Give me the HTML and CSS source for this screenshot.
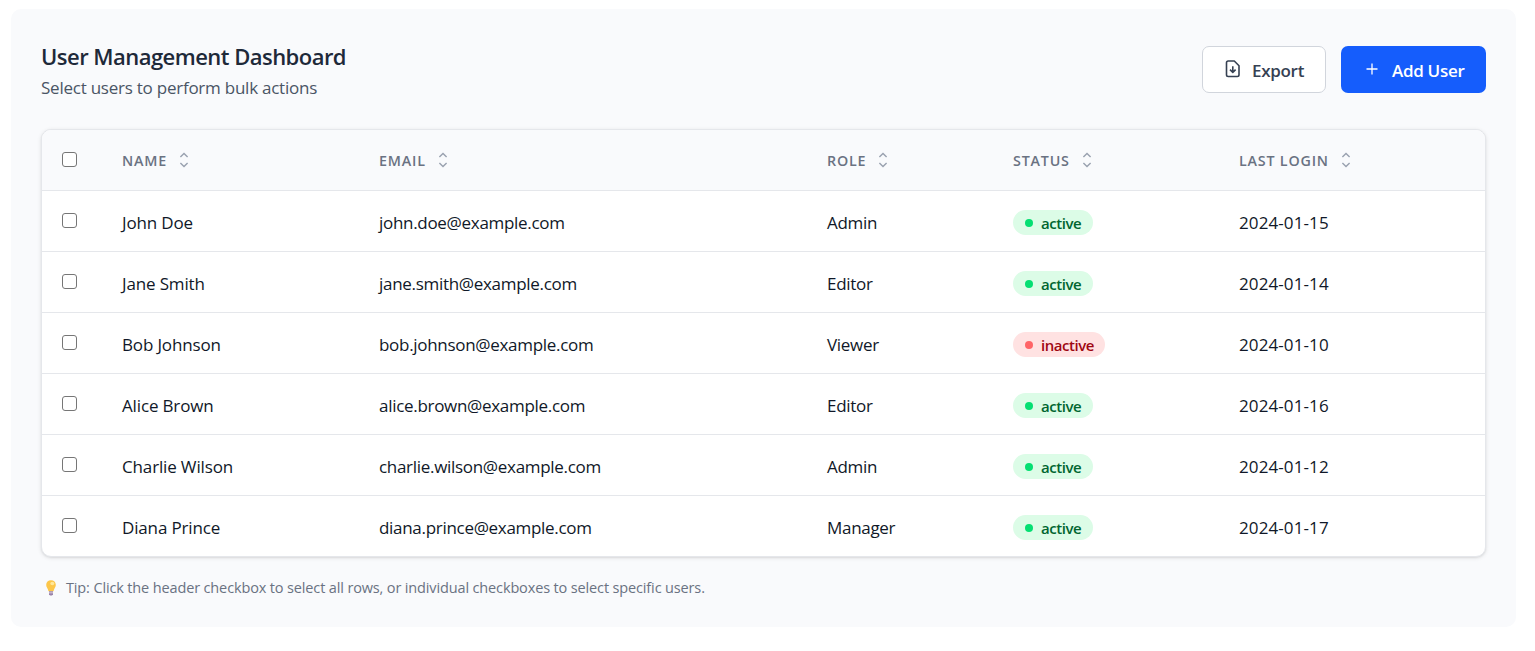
FILE: index.html
```html
<!DOCTYPE html>
<html lang="en">
<head>
<meta charset="utf-8">
<title>User Management Dashboard</title>
<link rel="stylesheet" href="styles.css">
</head>
<body>
<svg width="0" height="0" class="defs" aria-hidden="true">
  <symbol id="sort" viewBox="0 0 10 16"><path d="M1.4 5 5 1.4 8.6 5M1.4 11 5 14.6 8.6 11"/></symbol>
</svg>
<main class="panel">
  <header class="top">
    <div>
      <h1 class="title"><span>User Management Dashboard</span></h1>
      <p class="subtitle"><span>Select users to perform bulk actions</span></p>
    </div>
    <div class="actions">
      <button class="btn btn-light">
        <svg class="icon-file" width="16" height="18" viewBox="0 0 16 18"><path d="M9.3 1H3.2Q1.5 1 1.5 2.7V14.8Q1.5 16.5 3.2 16.5H12.3Q14 16.5 14 14.8V5.7ZM7.8 6.2V12.2M5 9.6 7.8 12.4 10.6 9.6"/></svg>
        <span class="export">Export</span>
      </button>
      <button class="btn btn-primary">
        <svg class="icon-plus" width="12" height="12" viewBox="0 0 12 12"><path d="M6 .5V11.5M.5 6H11.5"/></svg>
        <span class="add">Add User</span>
      </button>
    </div>
  </header>
  <section class="table">
    <div class="row head">
      <div class="check"><input type="checkbox"></div>
      <div><span>NAME</span><svg class="sort"><use href="#sort"/></svg></div>
      <div><span>EMAIL</span><svg class="sort"><use href="#sort"/></svg></div>
      <div><span>ROLE</span><svg class="sort"><use href="#sort"/></svg></div>
      <div><span>STATUS</span><svg class="sort"><use href="#sort"/></svg></div>
      <div><span>LAST LOGIN</span><svg class="sort"><use href="#sort"/></svg></div>
    </div>
    <div class="row"><div class="check"><input type="checkbox"></div><div class="name">John Doe</div><div>john.doe@example.com</div><div>Admin</div><div><span class="badge active">active</span></div><div class="date">2024-01-15</div></div>
    <div class="row"><div class="check"><input type="checkbox"></div><div class="name">Jane Smith</div><div>jane.smith@example.com</div><div>Editor</div><div><span class="badge active">active</span></div><div class="date">2024-01-14</div></div>
    <div class="row"><div class="check"><input type="checkbox"></div><div class="name">Bob Johnson</div><div>bob.johnson@example.com</div><div>Viewer</div><div><span class="badge inactive">inactive</span></div><div class="date">2024-01-10</div></div>
    <div class="row"><div class="check"><input type="checkbox"></div><div class="name">Alice Brown</div><div>alice.brown@example.com</div><div>Editor</div><div><span class="badge active">active</span></div><div class="date">2024-01-16</div></div>
    <div class="row"><div class="check"><input type="checkbox"></div><div class="name">Charlie Wilson</div><div>charlie.wilson@example.com</div><div>Admin</div><div><span class="badge active">active</span></div><div class="date">2024-01-12</div></div>
    <div class="row"><div class="check"><input type="checkbox"></div><div class="name">Diana Prince</div><div>diana.prince@example.com</div><div>Manager</div><div><span class="badge active">active</span></div><div class="date">2024-01-17</div></div>
  </section>
  <p class="tip">
    <svg class="bulb" width="10" height="16" viewBox="0 0 10 16"><path d="M5 .3C2.1.3.2 2.3.2 5c0 2.2 1.6 3.3 2.3 6.2h5C8.2 8.300 9.800 7.200 9.800 5 9.800 2.300 7.900.3 5 .3Z" fill="#fcc64a"/><ellipse cx="6.300" cy="3.500" rx="2" ry="1.800" fill="#ffe79a"/><path d="M3 11.200h4v3L6 15.500H4l-1-1.300Z" fill="#9a83a8"/><path d="M3 12.800h4" stroke="#d5c8dc"/></svg>
    <span>Tip: Click the header checkbox to select all rows, or individual checkboxes to select specific users.</span>
  </p>
</main>
</body>
</html>
```
FILE: styles.css
```css
* { box-sizing: border-box; }
body { margin: 0; background: #fff; font-family: "Open Sans", "Noto Sans", sans-serif; color: #101828; }
.defs { display: block; height: 0; }
.panel { margin: 9px 19px 0 11px; height: 618px; padding: 37px 30px 0; background: #f9fafc; border-radius: 10px; }
.top { display: flex; justify-content: space-between; height: 83px; }
.title { margin: 0; font-size: 22px; line-height: 20px; font-weight: 600; color: #1e2939; letter-spacing: -0.53px; white-space: nowrap; }
.subtitle { margin: 10px 0 0; font-size: 17px; line-height: 24px; color: #4a5565; letter-spacing: -0.24px; white-space: nowrap; }
.actions { display: flex; gap: 15px; }
.btn { display: flex; align-items: center; height: 47px; border-radius: 7px; font: 600 17px/24px "Open Sans", sans-serif; padding: 2px 0 0; white-space: nowrap; letter-spacing: -0.3px; }
.btn-light { width: 124px; border: 1px solid #d1d5dc; background: #fff; color: #364153; padding-left: 22px; gap: 11px; }
.btn-primary { width: 145px; border: 0; background: #155dfc; color: #fff; padding-left: 25px; gap: 14px; }
.btn svg { fill: none; stroke: currentColor; flex: none; margin-bottom: 4px; }
.icon-file { stroke-width: 1.6; stroke-linejoin: round; }
.icon-plus { stroke-width: 1.3; }
.table { height: 428px; border: 1px solid #e5e7eb; border-radius: 10px; background: #fff; overflow: hidden; box-shadow: 0 1px 4px rgba(0,0,0,.1), 0 1px 2px rgba(0,0,0,.06); }
.row { display: grid; grid-template-columns: 60px 257px 448px 186px 226px 266px; height: 61px; border-bottom: 1px solid #e5e7eb; font-size: 17px; letter-spacing: -0.3px; }
.row:last-child { border-bottom-color: transparent; }
.row > div { display: flex; align-items: center; padding: 3px 0 0 20px; white-space: nowrap; }
.row > .check { padding: 0 0 2px 20px; }
.row > .name { letter-spacing: -0.15px; }
.row > .date { letter-spacing: 0.1px; }
.check input { appearance: none; width: 15px; height: 15px; margin: 0; border: 1px solid #767676; border-radius: 3px; background: #fff; }
.head { background: #f9fafc; color: #6a7282; font-size: 14.3px; font-weight: 600; letter-spacing: .8px; }
.head > div { padding-top: 0; }
.sort { width: 10px; height: 16px; margin-left: 12px; fill: none; stroke: #99a1af; stroke-width: 1.4; }
.badge { display: flex; align-items: center; height: 25px; padding: 1px 12px 0; border-radius: 13px; font-size: 15px; font-weight: 600; letter-spacing: -0.45px; }
.badge::before { content: ""; width: 8px; height: 8px; border-radius: 4px; margin-right: 8px; background: currentColor; flex: none; }
.active { background: #dcfce7; color: #016630; width: 80px; }
.active::before { background: #05df72; }
.inactive { background: #ffe2e2; color: #9f0712; width: 92px; }
.inactive::before { background: #ff6467; }
.tip { display: flex; align-items: center; gap: 10px; margin: 19px 0 0; padding-left: 5px; font-size: 14.5px; line-height: 24px; color: #6a7282; letter-spacing: -0.14px; white-space: nowrap; }
```
